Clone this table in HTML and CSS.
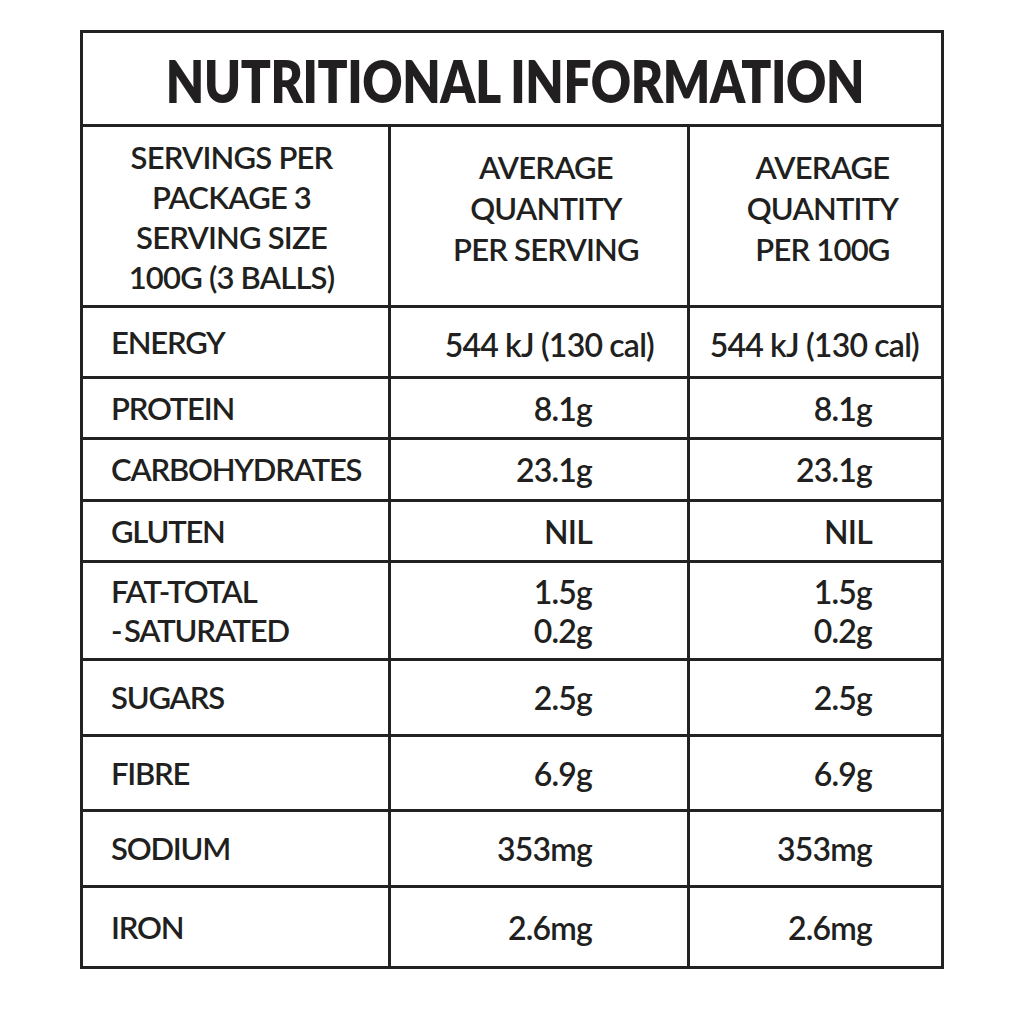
FILE: index.html
```html
<!DOCTYPE html>
<html>
<head>
<meta charset="utf-8">
<link rel="stylesheet" href="styles.css">
</head>
<body>
<div class="panel">
  <div class="cell title"><span class="title-text">NUTRITIONAL INFORMATION</span></div>

  <div class="cell head head-1"><span>SERVINGS PER<br>PACKAGE 3<br>SERVING SIZE<br>100G (3 BALLS)</span></div>
  <div class="cell head head-2"><span>AVERAGE<br>QUANTITY<br>PER SERVING</span></div>
  <div class="cell head head-3"><span>AVERAGE<br>QUANTITY<br>PER 100G</span></div>

  <div class="cell label">ENERGY</div>
  <div class="cell val v2 energy">544 kJ (130 cal)</div>
  <div class="cell val v3 energy">544 kJ (130 cal)</div>

  <div class="cell label">PROTEIN</div>
  <div class="cell val v2">8.1g</div>
  <div class="cell val v3">8.1g</div>

  <div class="cell label">CARBOHYDRATES</div>
  <div class="cell val v2">23.1g</div>
  <div class="cell val v3">23.1g</div>

  <div class="cell label">GLUTEN</div>
  <div class="cell val v2">NIL</div>
  <div class="cell val v3">NIL</div>

  <div class="cell label two"><span>FAT-TOTAL<br>-&thinsp;SATURATED</span></div>
  <div class="cell val v2 two"><span>1.5g<br>0.2g</span></div>
  <div class="cell val v3 two"><span>1.5g<br>0.2g</span></div>

  <div class="cell label">SUGARS</div>
  <div class="cell val v2">2.5g</div>
  <div class="cell val v3">2.5g</div>

  <div class="cell label">FIBRE</div>
  <div class="cell val v2">6.9g</div>
  <div class="cell val v3">6.9g</div>

  <div class="cell label">SODIUM</div>
  <div class="cell val v2">353mg</div>
  <div class="cell val v3">353mg</div>

  <div class="cell label">IRON</div>
  <div class="cell val v2">2.6mg</div>
  <div class="cell val v3">2.6mg</div>
</div>
</body>
</html>
```

FILE: styles.css
```css
html, body {
  margin: 0;
  padding: 0;
  background: #ffffff;
}

body {
  padding: 30px 0 0 80px;
  font-family: "Lato", "Liberation Sans", sans-serif;
  color: #211f20;
}

.panel {
  width: 858px;
  display: grid;
  grid-template-columns: 305px 296px 251px;
  grid-template-rows: 91px 178px 68px 58px 59px 58px 95px 73px 72px 73px 78px;
  gap: 3px;
  padding: 3px;
  background: #232223;
}

.cell {
  background: #ffffff;
  display: flex;
  align-items: center;
  font-size: 31px;
  font-weight: 600;
  line-height: 39px;
  letter-spacing: -1.2px;
}

.title {
  grid-column: 1 / 4;
  justify-content: center;
  padding-top: 4px;
}

.title-text {
  display: inline-block;
  font-size: 59px;
  font-weight: 800;
  letter-spacing: -0.5px;
  white-space: nowrap;
  transform: scaleX(0.84);
  padding-left: 8px;
}

.head {
  justify-content: center;
  text-align: center;
  font-size: 31px;
  line-height: 40px;
  letter-spacing: -0.8px;
}

.head-1 { padding-right: 8px; padding-top: 2px; }
.head-2 { padding-left: 14px; line-height: 41px; padding-bottom: 16px; }
.head-3 { padding-left: 14px; line-height: 41px; padding-bottom: 16px; }

.label {
  padding-left: 28px;
}

.val {
  justify-content: flex-end;
  text-align: right;
  font-size: 32px;
  letter-spacing: -0.8px;
}

.v2 { padding-right: 95px; }
.v3 { padding-right: 69px; }

.v2.energy { padding-right: 33px; }
.v3.energy { padding-right: 22px; }

.energy { padding-top: 4px; }

.two { line-height: 39px; }
```
